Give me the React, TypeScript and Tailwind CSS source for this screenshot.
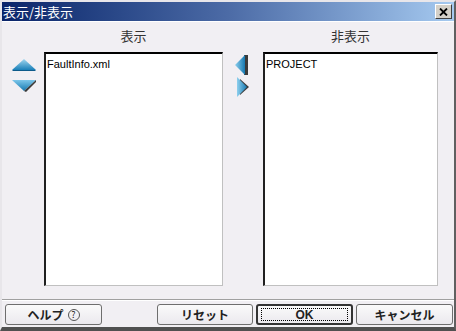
import React from 'react'

const jp = { fontFamily: '"Noto Sans CJK JP", "Liberation Sans", sans-serif' }

function UpArrow() {
  return (
    <svg width="26" height="14" viewBox="0 0 26 14">
      <defs>
        <linearGradient id="ug" x1="0" y1="0" x2="0" y2="1">
          <stop offset="0" stopColor="#9fd6ef" />
          <stop offset="1" stopColor="#1a7fb8" />
        </linearGradient>
      </defs>
      <polygon points="13,1 25,12 1,12" fill="url(#ug)" />
      <polygon points="1,12 25,12 24,13 2,13" fill="#0d5a8a" />
    </svg>
  )
}

function DownArrow() {
  return (
    <svg width="26" height="14" viewBox="0 0 26 14">
      <defs>
        <linearGradient id="dg" x1="0" y1="0" x2="0" y2="1">
          <stop offset="0" stopColor="#7cc6ea" />
          <stop offset="1" stopColor="#1578b0" />
        </linearGradient>
      </defs>
      <polygon points="1,1 25,1 13,12" fill="url(#dg)" />
      <polygon points="25,1 13,12 15,13 25,3" fill="#3a3a3a" />
    </svg>
  )
}

function LeftArrow() {
  return (
    <svg width="16" height="20" viewBox="0 0 16 20">
      <defs>
        <linearGradient id="lg" x1="0" y1="0" x2="1" y2="0">
          <stop offset="0" stopColor="#8fd0ee" />
          <stop offset="1" stopColor="#1578b0" />
        </linearGradient>
      </defs>
      <polygon points="10,0 14,0 14,20 10,20" fill="#3a3a3a" />
      <polygon points="11,0 11,20 1,10" fill="url(#lg)" />
    </svg>
  )
}

function RightArrow() {
  return (
    <svg width="16" height="20" viewBox="0 0 16 20">
      <defs>
        <linearGradient id="rg" x1="0" y1="0" x2="1" y2="0">
          <stop offset="0" stopColor="#8fd0ee" />
          <stop offset="1" stopColor="#1578b0" />
        </linearGradient>
      </defs>
      <polygon points="6,2 15,10 6,18" fill="#3a3a3a" />
      <polygon points="3,0 13,10 3,20" fill="url(#rg)" />
    </svg>
  )
}

function ListBox({ items }: { items: string[] }) {
  return (
    <div className="h-[234px] bg-white border-t-2 border-l-2 border-t-black border-l-[#202020] border-r border-b border-r-[#c0c0c0] border-b-[#c0c0c0] px-[1px] pt-[4px]">
      {items.map((it) => (
        <div key={it} className="text-[11px] leading-[13px] text-black" style={{ fontFamily: '"Liberation Sans", Arial, sans-serif' }}>
          {it}
        </div>
      ))}
    </div>
  )
}

function Btn({ children, def, className }: { children: React.ReactNode; def?: boolean; className?: string }) {
  return (
    <div
      className={`h-[21px] flex items-center justify-center rounded-[3px] bg-gradient-to-b from-[#fafafa] to-[#ebe9ee] text-[12px] font-bold text-[#222] ${def ? 'border-2 border-[#333]' : 'border border-[#6e6e6e]'} ${className ?? ''}`}
      style={jp}
    >
      {def ? (
        <div className="w-[calc(100%-6px)] h-[13px] border border-dotted border-black flex items-center justify-center">{children}</div>
      ) : (
        children
      )}
    </div>
  )
}

export default function App() {
  return (
    <div className="w-[456px] h-[331px] bg-[#f1eff3] border-l-2 border-t-2 border-l-[#e8e6ea] border-t-[#e8e6ea] border-r-2 border-b-[4px] border-r-[#606060] border-b-[#505050] flex flex-col overflow-hidden">
      <div className="h-[19px] flex items-center justify-between bg-gradient-to-r from-[#0a246a] via-[#4c6ba6] to-[#a6caf0] pl-[1px] pr-[2px]">
        <span className="text-white text-[13px] leading-none" style={jp}>表示/非表示</span>
        <div className="w-[17px] h-[15px] bg-[#d4d0c8] border border-t-white border-l-white border-r-[#404040] border-b-[#404040] flex items-center justify-center">
          <svg width="9" height="8" viewBox="0 0 9 8">
            <path d="M1 0.5 L8 7.5 M8 0.5 L1 7.5" stroke="#000" strokeWidth="1.8" />
          </svg>
        </div>
      </div>
      <div className="h-[1px] bg-white" />
      <div className="flex h-[277px]">
        <div className="w-[42px] flex flex-col items-center pl-[2px] pt-[36px] gap-[7px]">
          <UpArrow />
          <DownArrow />
        </div>
        <div className="w-[179px] flex flex-col">
          <div className="h-[30px] pt-[6px] text-center text-[13px] leading-[16px] text-[#333]" style={jp}>表示</div>
          <ListBox items={['FaultInfo.xml']} />
        </div>
        <div className="w-[40px] flex flex-col items-center pt-[33px] gap-[2px] pr-[3px]">
          <LeftArrow />
          <RightArrow />
        </div>
        <div className="w-[175px] flex flex-col">
          <div className="h-[30px] pt-[6px] text-center text-[13px] leading-[16px] text-[#333]" style={jp}>非表示</div>
          <ListBox items={['PROJECT']} />
        </div>
      </div>
      <div className="h-[1px] bg-[#a0a0a0]" />
      <div className="h-[1px] bg-white" />
      <div className="flex items-center pl-[3px] pr-[1px] pt-[3px]">
        <Btn className="w-[97px]">
          <span>ヘルプ</span>
          <span className="ml-[4px] w-[12px] h-[12px] rounded-full border border-[#555] text-[9px] leading-none font-normal flex items-center justify-center">?</span>
        </Btn>
        <div className="flex-1" />
        <Btn className="w-[96px] mr-[3px]">リセット</Btn>
        <Btn def className="w-[97px] mr-[3px]">
          <span style={{ fontFamily: '"Liberation Sans", sans-serif' }}>OK</span>
        </Btn>
        <Btn className="w-[97px]">キャンセル</Btn>
      </div>
    </div>
  )
}
